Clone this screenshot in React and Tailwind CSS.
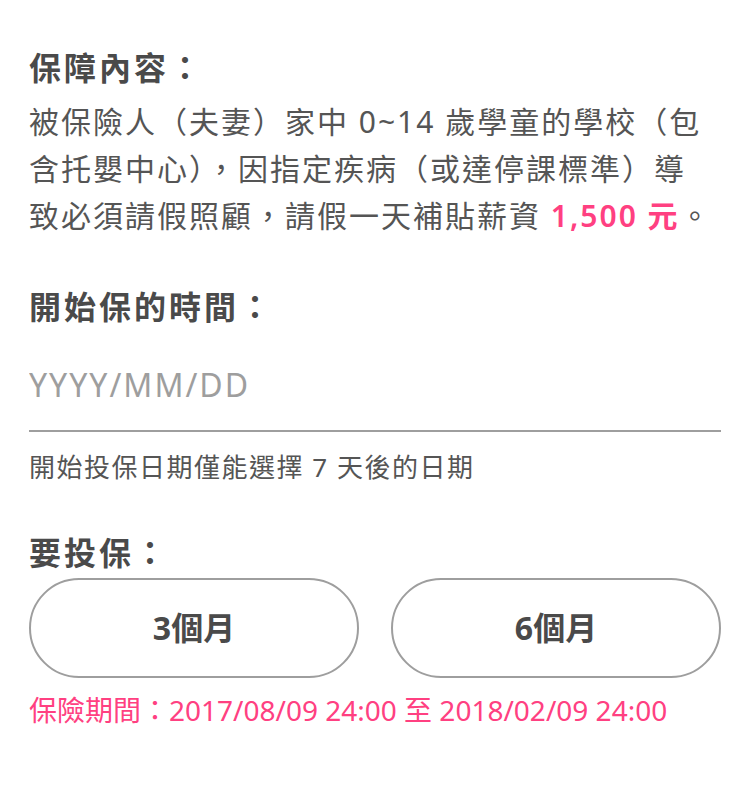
import { useState } from 'react';

const font = { fontFamily: '"Noto Sans", "Noto Sans CJK TC", sans-serif' };

export default function App() {
  const [date, setDate] = useState('');
  const [plan, setPlan] = useState(null);

  return (
    <div className="min-h-[790px] bg-white px-[29px] pt-[48px] text-[#4a4a4a]" lang="zh-TW" style={font}>
      <h2 className="text-[32px] font-bold leading-[40px] tracking-[3px]">保障內容：</h2>
      <p className="mt-[10px] text-[30px] leading-[47px] tracking-[2px] text-[#555]">
        被保險人（夫妻）家中 0~14 歲學童的學校（包
        <br />
        含托嬰中心），因指定疾病（或達停課標準）導
        <br />
        致必須請假照顧，請假一天補貼薪資 <strong className="font-semibold text-[#ff4081]">1,500 元</strong>。
      </p>

      <h2 className="mt-[48px] text-[32px] font-bold leading-[40px] tracking-[3px]">開始保的時間：</h2>
      <input
        className="mt-[17px] box-border h-[88px] w-full border-b-2 border-[#9e9e9e] bg-transparent pb-[6px] text-[32px] tracking-[2px] text-[#4a4a4a] outline-none placeholder:text-[#9e9e9e]"
        onChange={(event) => setDate(event.target.value)}
        placeholder="YYYY/MM/DD"
        type="text"
        value={date}
      />
      <p className="mt-[18px] text-[26px] leading-[34px] tracking-[1.5px] text-[#555]">開始投保日期僅能選擇 7 天後的日期</p>

      <h2 className="mt-[49px] text-[32px] font-bold leading-[40px] tracking-[3px]">要投保：</h2>
      <div className="mt-[5px] grid grid-cols-2 gap-[32px]">
        {['3個月', '6個月'].map((label) => (
          <button
            className="h-[100px] rounded-full border-2 border-[#9e9e9e] bg-white text-[32px] font-bold text-[#4a4a4a]"
            key={label}
            onClick={() => setPlan(label)}
            type="button"
          >
            {label}
          </button>
        ))}
      </div>
      <p className="mt-[14px] text-[28px] leading-[36px] text-[#ff4081]">保險期間：2017/08/09 24:00 至 2018/02/09 24:00</p>
    </div>
  );
}
